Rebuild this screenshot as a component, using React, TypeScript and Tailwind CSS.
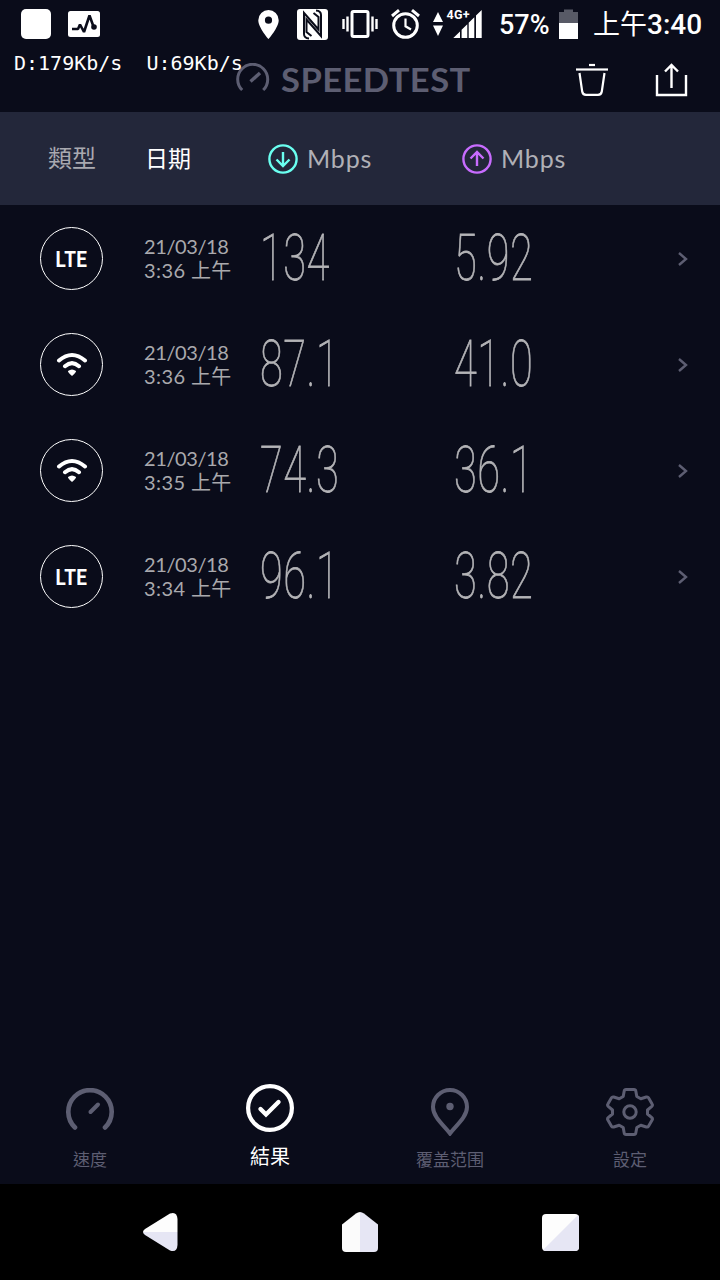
import React from 'react';

type Network = 'lte' | 'wifi';

interface Result {
  type: Network;
  date: string;
  time: string;
  down: string;
  up: string;
}

const results: Result[] = [
  { type: 'lte', date: '21/03/18', time: '3:36 上午', down: '134', up: '5.92' },
  { type: 'wifi', date: '21/03/18', time: '3:36 上午', down: '87.1', up: '41.0' },
  { type: 'wifi', date: '21/03/18', time: '3:35 上午', down: '74.3', up: '36.1' },
  { type: 'lte', date: '21/03/18', time: '3:34 上午', down: '96.1', up: '3.82' },
];

const StatusBar: React.FC = () => (
  <div className="flex h-12 items-center pl-[21px] text-white">
    <div className="h-[30px] w-[30px] rounded-[5px] bg-white" />
    <svg className="ml-[17px] shrink-0" width="32" height="26" viewBox="0 0 32 26">
      <rect width="32" height="26" rx="2.5" fill="#fff" />
      <path d="M4 18h6l2-4.500 4 7.500L21.500 4.500 26 17" fill="none" stroke="#0a0c1a" strokeWidth="2.600" strokeLinejoin="bevel" />
      <circle cx="26" cy="16" r="2.800" fill="#0a0c1a" />
    </svg>
    <svg className="ml-[158px] shrink-0" width="21" height="29" viewBox="0 0 21 29">
      <path d="M10.500 0A10.200 10.200 0 0 0 .3 10.200C.3 17.500 10.500 29 10.500 29S20.700 17.500 20.700 10.200A10.200 10.200 0 0 0 10.500 0Zm0 13.800a3.600 3.600 0 1 1 0-7.200 3.600 3.600 0 0 1 0 7.200Z" fill="#fff" />
    </svg>
    <svg className="ml-[18px] shrink-0" width="31" height="31" viewBox="0 0 31 31">
      <rect width="31" height="31" rx="3" fill="#fff" />
      <path d="M12 29.500Q7 29 7 25V4L21.500 20.500V8L16.500 4" fill="none" stroke="#0a0c1a" strokeWidth="2" />
      <path d="M19 1.500Q24 2 24 6V27L9.500 10.500V23L14.500 27" fill="none" stroke="#0a0c1a" strokeWidth="2" />
    </svg>
    <svg className="ml-[14px] shrink-0" width="36" height="28" viewBox="0 0 36 28">
      <rect x="10" y="1.500" width="16" height="25" rx="1.500" fill="none" stroke="#fff" strokeWidth="3" />
      <path d="M1.500 9v10M5.500 6.500v15M30.500 6.500v15M34.500 9v10" stroke="#fff" strokeWidth="2.400" />
    </svg>
    <svg className="ml-[13px] shrink-0" width="29" height="30" viewBox="0 0 29 30">
      <circle cx="14.500" cy="16.500" r="11.800" fill="none" stroke="#fff" strokeWidth="3" />
      <path d="M14.500 9.500v7.800l5.500 3.200" fill="none" stroke="#fff" strokeWidth="2.200" />
      <path d="M1 7l7-5.800M28 7l-7-5.800" stroke="#fff" strokeWidth="3" />
    </svg>
    <svg className="ml-[13px] shrink-0" width="54" height="40" viewBox="0 -4 54 40">
      <path d="M5 4l5 10H0ZM0 17.500h10L5 28Z" fill="#fff" />
      <path d="M20.300 30L27 23.400V30ZM28.600 30V21.800L34.300 16.200V30ZM35.700 30V14.800L41.300 9.300V30ZM43 30V7.600L48.700 2V30Z" fill="#fff" />
      <text x="13.500" y="10.500" fill="#fff" fontFamily="Roboto" fontSize="12.500" fontWeight="700" letterSpacing="0.300">4G+</text>
    </svg>
    <span className="ml-[12px] w-[60px] pt-0.5 font-['Roboto'] text-[27px] font-medium leading-none">57%</span>
    <svg className="shrink-0" width="19" height="30" viewBox="0 0 19 30">
      <path d="M0 14V3h5V.5h9V3h5v11Z" fill="#585a66" />
      <path d="M0 14h19v16H0Z" fill="#fff" />
    </svg>
    <span className="ml-[15px] whitespace-nowrap pt-0.5 font-['Roboto','Noto_Sans_CJK_TC',sans-serif] text-[28px] font-medium leading-none">
      <span className="text-[27px] font-normal">上午</span>3:40
    </span>
  </div>
);

const Header: React.FC = () => (
  <div className="relative flex h-16 items-start">
    <span className="absolute left-[14px] top-[5px] whitespace-pre font-['DejaVu_Sans_Mono',monospace] text-[20px] leading-none text-white">
      {'D:179Kb/s  U:69Kb/s'}
    </span>
    <svg className="ml-[236px] mt-[15px] shrink-0" width="34" height="30" viewBox="0 0 34 30">
      <path d="M6.200 27A15 15 0 1 1 27.200 27" fill="none" stroke="#5d5e72" strokeWidth="3" />
      <path d="M14.500 18.500L24 10" stroke="#5d5e72" strokeWidth="3.400" />
    </svg>
    <span className="ml-[11px] mt-[16px] w-[190px] origin-left scale-x-[1.08] font-['Lato',sans-serif] text-[32px] font-bold leading-none tracking-[0.4px] text-[#5d5e72]">SPEEDTEST</span>
    <svg className="ml-[105px] mt-[15px] shrink-0" width="32" height="34" viewBox="0 0 32 34">
      <path d="M0 6.500h32" stroke="#fff" strokeWidth="2.200" />
      <path d="M13 2h6" stroke="#fff" strokeWidth="2.200" />
      <path d="M3.500 10l2.700 18.500a4 4 0 0 0 3.800 3.400h12a4 4 0 0 0 3.800-3.400L28.500 10" fill="none" stroke="#fff" strokeWidth="2.200" />
    </svg>
    <svg className="ml-[47px] mt-[15px] shrink-0" width="33" height="34" viewBox="0 0 33 34">
      <path d="M2 12v20h29V12" fill="none" stroke="#fff" strokeWidth="2.400" />
      <path d="M16.500 25V3M10 8.500l6.500-6.500L23 8.500" fill="none" stroke="#fff" strokeWidth="2.400" />
    </svg>
  </div>
);

const SpeedHeading: React.FC<{ color: string; up?: boolean }> = ({ color, up }) => (
  <div className="flex w-[194px] items-center">
    <svg width="30" height="30" viewBox="0 0 30 30" fill="none" stroke={color} strokeWidth="2.400">
      <circle cx="15" cy="15" r="13.600" />
      <path d={up ? 'M15 22V9M8.500 14.500L15 8l6.500 6.500' : 'M15 8v13M8.500 15.500L15 22l6.500-6.500'} />
    </svg>
    <span className="ml-[9px] font-['Lato',sans-serif] text-[25px] leading-none tracking-[0.8px] text-[#b0b0b6]">Mbps</span>
  </div>
);

const NetworkIcon: React.FC<{ type: Network }> = ({ type }) => (
  <div className="flex h-[63px] w-[63px] items-center justify-center rounded-full border-[1.5px] border-white">
    {type === 'lte' ? (
      <span className="scale-x-[0.86] pt-[3px] font-['Roboto',sans-serif] text-[22px] font-bold leading-none tracking-[0.5px] text-white">LTE</span>
    ) : (
      <svg width="32" height="26" viewBox="0 0 32 26">
        <path d="M3 9.500Q16 -1.500 29 9.500M9 15.200Q16 9 23 15.200" fill="none" stroke="#fff" strokeWidth="4" strokeLinecap="round" />
        <path d="M12 20q4-3 8 0q.5 1-4 5q-4.500-4-4-5Z" fill="#fff" />
      </svg>
    )}
  </div>
);

const Speed: React.FC<{ value: string }> = ({ value }) => (
  <div className="w-[194px]">
    <span className="inline-block origin-left scale-x-[0.64] font-['Roboto',sans-serif] text-[65px] font-thin leading-none tracking-[0.8px] text-[#b4b4b7] [-webkit-text-stroke:0.8px_#b4b4b7]">{value}</span>
  </div>
);

const ResultRow: React.FC<{ result: Result }> = ({ result }) => (
  <div className="flex h-[106px] items-center pl-10">
    <NetworkIcon type={result.type} />
    <div className="ml-[41px] w-[116px] whitespace-nowrap font-['Lato','Noto_Sans_CJK_TC',sans-serif] text-[20px] leading-6 text-[#a9a9ad]">
      <div className="tracking-[-0.4px]">{result.date}</div>
      <div className="tracking-[0.4px]">{result.time}</div>
    </div>
    <Speed value={result.down} />
    <Speed value={result.up} />
    <svg className="ml-[30px] mt-px" width="10" height="14" viewBox="0 0 10 14">
      <path d="M1 1l7 6-7 6" fill="none" stroke="#5d5e72" strokeWidth="2.400" />
    </svg>
  </div>
);

const TabBar: React.FC = () => (
  <div className="grid h-[104px] grid-cols-4 font-['Noto_Sans_CJK_TC',sans-serif] text-[17px] leading-none text-[#5d5e72]">
    <div className="flex flex-col items-center pt-2">
      <svg width="48" height="48" viewBox="0 0 48 48" fill="none" stroke="#5d5e72" strokeLinecap="round">
        <path d="M9 39.500A21.700 21.700 0 1 1 39 39.500" strokeWidth="4.600" />
        <path d="M24.500 24l7.500-7.500" strokeWidth="4" />
      </svg>
      <span className="mt-[14px]">速度</span>
    </div>
    <div className="flex flex-col items-center pt-1 text-white">
      <svg width="48" height="48" viewBox="0 0 48 48" fill="none" stroke="#fff">
        <circle cx="24" cy="24" r="21.900" strokeWidth="4.200" />
        <path d="M14.500 25l5.500 5.500L32.500 18" strokeWidth="4.400" strokeLinecap="round" />
      </svg>
      <span className="mt-[14px] text-[20px]">結果</span>
    </div>
    <div className="flex flex-col items-center pt-2">
      <svg width="48" height="48" viewBox="0 0 48 48" fill="none">
        <path d="M24 45.500C18 37.500 7 29 7 19a17 17 0 0 1 34 0C41 29 30 37.500 24 45.500Z" stroke="#5d5e72" strokeWidth="4" />
        <circle cx="24" cy="18.500" r="3.700" fill="#5d5e72" />
      </svg>
      <span className="mt-[14px]">覆盖范围</span>
    </div>
    <div className="flex flex-col items-center pt-2">
      <svg width="48" height="48" viewBox="0 0 48 48" fill="none" stroke="#5d5e72" strokeWidth="3" strokeLinejoin="round">
        <path d="M20 1.500h8q1.500 0 1.800 1.500l1 5.500 4 2.300 5.500-1.800q1.500-.4 2.200.8l3.600 6.200q.8 1.300-.3 2.300l-4.300 3.700v4l4.300 3.700q1.100 1 .3 2.300l-3.600 6.200q-.7 1.200-2.200.8l-5.500-1.800-4 2.300-1 5.500q-.3 1.500-1.800 1.500h-8q-1.500 0-1.800-1.500l-1-5.500-4-2.300-5.500 1.800q-1.500.4-2.200-.8L1.900 32q-.8-1.300.3-2.300L6.500 26v-4l-4.300-3.700q-1.100-1-.3-2.300l3.600-6.200q.7-1.200 2.200-.8l5.500 1.800 4-2.300 1-5.500q.3-1.500 1.800-1.500Z" />
        <circle cx="24" cy="24" r="6.200" />
      </svg>
      <span className="mt-[14px]">設定</span>
    </div>
  </div>
);

const SystemNav: React.FC = () => (
  <div className="flex h-24 items-center bg-black">
    <svg className="ml-[143px]" width="35" height="40" viewBox="0 0 35 40">
      <path d="M2 17L27 1.500Q34 -1 34.500 7V20H0Q0 18.500 2 17Z" fill="#fdfdfd" />
      <path d="M2 23L27 38.500Q34 41 34.500 33V20H0Q0 21.500 2 23Z" fill="#e6e6f4" />
    </svg>
    <svg className="ml-[164px]" width="36" height="40" viewBox="0 0 36 40">
      <path d="M18 0q-2 0-4 1.500L0 12.500V36q0 4 4 4h14Z" fill="#fbfbfb" />
      <path d="M18 0q2 0 4 1.500L36 12.500V36q0 4-4 4H18Z" fill="#e6e6f4" />
    </svg>
    <svg className="ml-[164px]" width="37" height="37" viewBox="0 0 37 37">
      <rect width="37" height="37" rx="4" fill="#fdfdfd" />
      <path d="M36 1q1 1 1 3v29q0 4-4 4H4q-2 0-3-1Z" fill="#e6e6f4" />
    </svg>
  </div>
);

const App: React.FC = () => (
  <div className="flex h-[1280px] w-[720px] flex-col overflow-hidden bg-[#0a0c1a]">
    <StatusBar />
    <Header />
    <div className="flex h-[93px] items-center bg-[#23273a] font-['Noto_Sans_CJK_TC',sans-serif] text-[24px] leading-none">
      <span className="ml-12 w-[97px] pb-[3px] text-[#a9a9b0]">類型</span>
      <span className="w-[123px] pb-[3px] text-[23px] text-white">日期</span>
      <SpeedHeading color="#6afff0" />
      <SpeedHeading color="#c86cff" up />
    </div>
    <div className="flex-1">
      {results.map((result, i) => (
        <ResultRow key={i} result={result} />
      ))}
    </div>
    <TabBar />
    <SystemNav />
  </div>
);

export default App;
